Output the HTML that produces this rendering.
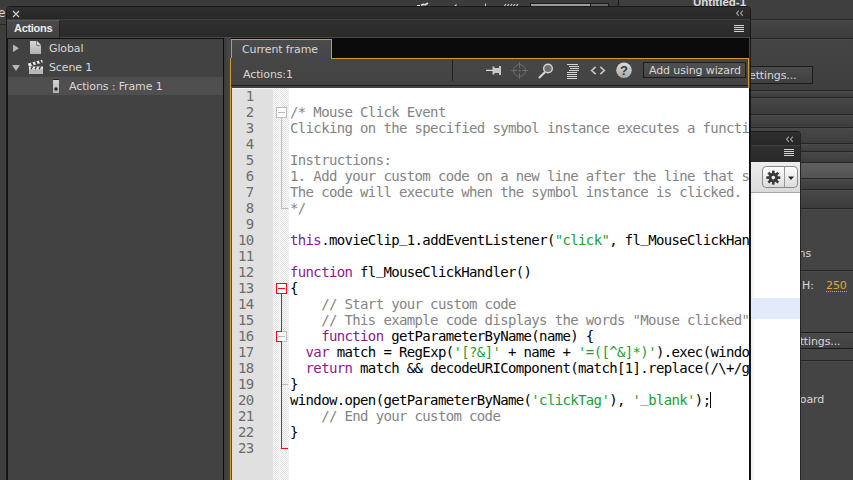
<!DOCTYPE html>
<html>
<head>
<meta charset="utf-8">
<title>Actions</title>
<style>
html,body{margin:0;padding:0;width:853px;height:480px;overflow:hidden;}
#root{position:absolute;left:0;top:0;width:853px;height:480px;overflow:hidden;background:#3d3d3d;}
body{width:853px;height:480px;overflow:hidden;background:#3d3d3d;position:relative;font-family:"DejaVu Sans","Liberation Sans",sans-serif;font-size:11px;color:#d8d8d8;letter-spacing:-0.12px;}
div,span,svg{box-sizing:border-box;}
.a{position:absolute;}
svg{position:absolute;overflow:visible;}
.t{position:absolute;white-space:pre;line-height:14px;height:14px;}
.hl{position:absolute;left:751px;width:102px;height:2px;background:linear-gradient(#252525 50%,#4a4a4a 50%);}
.bd{position:absolute;left:751px;width:102px;background:linear-gradient(#474747,#3c3c3c);}
/* ---------- main panel ---------- */
#panel{left:6px;top:6px;width:745px;height:480px;background:#424242;border:1px solid #1a1a1a;border-radius:4px 4px 0 0;overflow:hidden;}
#in{left:-7px;top:-7px;width:853px;height:480px;}
#titlebar{left:7px;top:7px;width:743px;height:12px;background:linear-gradient(#2f2f2f,#272727);}
#tabbar{left:7px;top:19px;width:743px;height:19px;background:linear-gradient(#303030,#2a2a2a);border-top:1px solid #3f3f3f;border-bottom:1px solid #484848;}
#tab{left:7px;top:20px;width:53px;height:18px;background:linear-gradient(#4a4a4a,#424242);border-top:1px solid #585858;border-right:1px solid #222;}
#tree{left:7px;top:38px;width:217px;height:450px;background:#424242;border:1px solid #0e0e0e;}
#sel{left:8px;top:77px;width:215px;height:18px;background:#4f4f4f;}
#gap{left:224px;top:38px;width:6px;height:450px;background:linear-gradient(90deg,#3b3b3b,#474747);}
/* ---------- editor ---------- */
#black{left:231px;top:38px;width:518px;height:21px;background:#0b0b0b;}
#ctab{left:231px;top:39px;width:101px;height:20px;background:linear-gradient(#4b4b4b,#464646);border:1px solid #d19b2c;border-bottom:none;}
#tool{left:230px;top:58px;width:519px;height:28px;background:linear-gradient(#464646,#434343);border:1px solid #d19b2c;border-bottom:none;border-top:none;}
#toolt{left:331px;top:58px;width:418px;height:1px;background:#d19b2c;}
#toolb{left:231px;top:85px;width:518px;height:3px;background:linear-gradient(#1e1e1e 1px,#444 1px);}
#edl{left:230px;top:86px;width:2px;height:420px;background:linear-gradient(90deg,#d69f2a 50%,#4e5258 50%);}
#gut{left:232px;top:88px;width:41px;height:420px;background:#e0e0e0;border-top:1px solid #f4f4f4;}
#fold{left:273px;top:88px;width:16px;height:420px;background:conic-gradient(#e2e2e2 25%,#fff 0 50%,#e2e2e2 0 75%,#fff 0) 0 0/2px 2px;}
#code{left:289px;top:88px;width:460px;height:420px;background:#fff;}
#clip{left:231px;top:0;width:518px;height:480px;overflow:hidden;}
#edr{left:749px;top:88px;width:2px;height:420px;background:#0c0c0c;}
.ln,.cl{position:absolute;font-family:"DejaVu Sans Mono","Liberation Mono",monospace;font-size:14px;line-height:16px;height:16px;white-space:pre;letter-spacing:-0.644px;}
.ln{left:222.5px;width:31px;text-align:right;color:#6c6c6c;}
.cl{left:290px;color:#000;}
.c{color:#848484;}
.k{color:#8b1a89;}
.s{color:#22a033;}
.u{position:relative;top:-3px;}
.fg{position:absolute;background:#bdbdbd;}
.fr{position:absolute;background:#ff0022;}
.fb{position:absolute;width:11px;height:11px;left:276px;background:#fff;border:1px solid #bdbdbd;}
/* ---------- second panel ---------- */
#p2{left:751px;top:131px;width:50px;height:360px;background:#2b2b2b;border-right:1px solid #242424;border-top:1px solid #1c1c1c;border-radius:0 4px 0 0;overflow:hidden;}
#p2in{left:-751px;top:-132px;width:853px;height:480px;}
</style>
</head>
<body>
<div id="root">
<!-- background application -->
<div class="a" style="left:0;top:0;width:853px;height:480px;">
  <div class="a" style="left:0;top:0;width:853px;height:24px;background:#3f3f3f;"></div>
  <div class="a" style="left:0;top:0;width:618px;height:7px;background:#3b3b3b;"></div>
  <div class="a" style="left:618px;top:0;width:1px;height:7px;background:#1a1a1a;"></div>
  <div class="a" style="left:0;top:24px;width:8px;height:1px;background:#262626;"></div>
  <div class="t" style="left:-2px;top:6px;font-size:12px;">e</div>
  <div class="a" style="left:530px;top:3px;width:79px;height:6px;border:1px solid #1c1c1c;background:linear-gradient(90deg,#9c9c9c 59px,#1c1c1c 59px,#1c1c1c 60px,#666 60px);"></div>
  <svg style="left:400px;top:0" width="130" height="7" viewBox="0 0 130 7"><path d="M17 5.800h3M21 5.400l3.500-1.400M24.500 5.200l3.500-2.200" stroke="#dcdcdc" stroke-width="1.700" fill="none"/><path d="M54 6.200l2.500-2.500v2.500z" fill="#d0d0d0"/><path d="M85.500 3.500v2.700M104.300 6l1.800-1.800M107.300 6l1.800-1.800M110.300 6l1.800-1.800M113.300 6l1.800-1.800M116.300 6l1.800-1.800" stroke="#c8c8c8" stroke-width="1.100" fill="none"/></svg>
  <div class="t" style="left:693px;top:-5px;color:#dcdcdc;font-family:'Liberation Sans',sans-serif;font-weight:bold;font-size:11.5px;letter-spacing:0;">Untitled-1</div>
  <div class="a" style="left:751px;top:19px;width:102px;height:19px;background:linear-gradient(#454545,#3c3c3c);"></div>
  <div class="hl" style="top:19px"></div>
  <div class="hl" style="top:38px"></div>
  <div class="bd" style="top:40px;height:50px;background:linear-gradient(#444,#3e3e3e);"></div>
  <div class="a" style="left:740px;top:66px;width:73px;height:18px;border:1px solid #1c1c1c;background:linear-gradient(#4b4b4b,#404040);"></div>
  <div class="t" style="left:749px;top:69px;">ettings...</div>
  <div class="bd" style="top:92px;height:5px"></div><div class="bd" style="top:99px;height:15px"></div><div class="bd" style="top:116px;height:11px"></div><div class="bd" style="top:129px;height:14px"></div><div class="bd" style="top:145px;height:6px"></div><div class="bd" style="top:153px;height:9px"></div><div class="bd" style="top:180px;height:9px"></div><div class="bd" style="top:191px;height:17px"></div>
  <div class="hl" style="top:90px"></div>
  <div class="hl" style="top:97px"></div>
  <div class="hl" style="top:114px"></div>
  <div class="hl" style="top:127px"></div>
  <div class="hl" style="top:143px"></div>
  <div class="hl" style="top:151px"></div>
  <div class="hl" style="top:162px"></div>
  <div class="a" style="left:801px;top:163px;width:52px;height:16px;background:linear-gradient(#606060,#525252);"></div>
  <div class="hl" style="top:178px"></div>
  <div class="hl" style="top:189px"></div>
  <div class="hl" style="top:208px"></div>
  <div class="a" style="left:801px;top:210px;width:52px;height:270px;background:#444;"></div>
  <div class="hl" style="top:270px"></div>
  <div class="t" style="left:789px;top:247px;">ions</div>
  <div class="t" style="left:802px;top:279px;">H:</div>
  <div class="t" style="left:826px;top:279px;color:#e6a634;">250</div>
  <div class="a" style="left:826px;top:291px;width:22px;height:1px;background:repeating-linear-gradient(90deg,#e2a232 0 1px,transparent 1px 2px);"></div>
  <div class="a" style="left:740px;top:332px;width:120px;height:17px;border:1px solid #1c1c1c;background:linear-gradient(#4b4b4b,#404040);"></div>
  <div class="t" style="left:793px;top:335px;">ettings...</div>
  <div class="hl" style="top:360px"></div>
  <div class="t" style="left:793px;top:393px;">board</div>
</div>

<!-- Actions panel -->
<div id="panel" class="a"><div id="in" class="a">
  <div id="titlebar" class="a"></div>
  <svg style="left:11.500px;top:10px" width="8" height="8" viewBox="0 0 8 8"><path d="M1 1l6 6M7 1l-6 6" stroke="#cfcfcf" stroke-width="1.2" fill="none"/></svg>
  <svg style="left:735px;top:9px" width="10" height="8" viewBox="0 0 10 8"><path d="M3.800 1.600L1.600 4.200L3.800 6.800M7.800 1.600L5.600 4.200L7.800 6.800" stroke="#a4a4a4" stroke-width="1.100" fill="none"/></svg>
  <div id="tabbar" class="a"></div>
  <div id="tab" class="a"></div>
  <div class="t" style="left:14px;top:21px;font-family:'Liberation Sans',sans-serif;font-weight:bold;font-size:11px;letter-spacing:-0.3px;color:#ececec;">Actions</div>
  <div class="a" style="left:734px;top:25px;width:10px;height:7px;background:repeating-linear-gradient(#d4d4d4 0 1px,transparent 1px 2px);"></div>
  <div id="tree" class="a"></div>
  <div id="sel" class="a"></div>
  <svg style="left:8px;top:38px" width="60" height="60" viewBox="0 0 60 60">
    <defs><linearGradient id="g1" x1="0" y1="0" x2="0" y2="1"><stop offset="0" stop-color="#d8d8d8"/><stop offset="1" stop-color="#b0b0b0"/></linearGradient></defs>
    <path d="M5 6.5L11 10.2L5 14z" fill="#b6b6b6"/>
    <path d="M22 3h7l4 4v9h-11z" fill="url(#g1)"/>
    <path d="M28.600 3v4.400h4.400z" fill="#e6e6e6"/><path d="M28.600 3.200v4.200h4.200" fill="none" stroke="#555" stroke-width="0.800"/>
    <path d="M4 27h8l-4 6z" fill="#b6b6b6"/>
    <path d="M21 30h14v6h-14z" fill="#b8b8b8"/>
    <path d="M20 25.600l14 -3.800l0.800 2.800l-14 3.800z" fill="#ececec"/>
    <path d="M23.500 24.400l1.400 3M27.500 23.300l1.400 3M31.500 22.200l1.400 3" stroke="#383838" stroke-width="1.700"/>
    <path d="M21 28.6h14v2.6h-14z" fill="#e8e8e8"/>
    <path d="M24.5 28.6l-1.4 2.6M28.5 28.6l-1.4 2.6M32.500 28.6l-1.4 2.6" stroke="#3a3a3a" stroke-width="1.4"/>
    <rect x="45" y="41" width="6" height="14" fill="url(#g1)"/>
    <rect x="45" y="41" width="6" height="1" fill="#222"/>
    <circle cx="48" cy="51" r="1.7" fill="#222"/>
  </svg>
  <div class="t" style="left:49px;top:42px;">Global</div>
  <div class="t" style="left:49px;top:61px;">Scene 1</div>
  <div class="t" style="left:69px;top:80px;">Actions : Frame 1</div>
  <div id="gap" class="a"></div>

  <div id="black" class="a"></div>
  <div id="ctab" class="a"></div>
  <div class="t" style="left:242px;top:43px;">Current frame</div>
  <div id="tool" class="a"></div><div id="toolt" class="a"></div>
  <div class="t" style="left:243px;top:68px;">Actions:1</div>
  <div class="a" style="left:452px;top:60px;width:1px;height:21px;background:#222;"></div>
  <svg style="left:480px;top:58px" width="160" height="30" viewBox="0 0 160 30">
    <defs><linearGradient id="g2" x1="0" y1="0" x2="0" y2="1"><stop offset="0" stop-color="#dcdcdc"/><stop offset="1" stop-color="#a8a8a8"/></linearGradient></defs>
    <!-- pin -->
    <path d="M6 12.4h7" stroke="#d8d8d8" stroke-width="1.2"/>
    <path d="M12.500 8.500h2v1.500h4.500v-2h2v9h-2v-2h-4.500v1.500h-2z" fill="#c8c8c8"/>
    <!-- crosshair -->
    <circle cx="39.500" cy="12.500" r="6" fill="none" stroke="#6c6c6c" stroke-width="1"/>
    <path d="M39.500 4v6M39.500 15v6M31 12.500h6M42 12.500h6M39.500 11.500v2M38.500 12.500h2" stroke="#6c6c6c" stroke-width="1" fill="none"/>
    <!-- magnifier -->
    <circle cx="68" cy="10.500" r="4.300" fill="#707070" stroke="#d6d6d6" stroke-width="1.400"/>
    <path d="M64.500 14.500L59.500 19.500" stroke="#d6d6d6" stroke-width="2" stroke-linecap="round"/>
    <!-- lines -->
    <path d="M87 6.500h11M89 8.500h10M90 10.500h9M89 12.500h10M87 14.500h10M87 16.500h10M87 18.500h10M87 20.500h10" stroke="#d4d4d4" stroke-width="1"/>
    <!-- code -->
    <path d="M115.700 8.800L111.700 12.500L115.700 16.200M120.300 8.800L124.300 12.500L120.300 16.200" stroke="#c4c4c4" stroke-width="1.700" fill="none"/>
    <!-- help -->
    <circle cx="144" cy="12.200" r="7.800" fill="url(#g2)"/>
    <text x="144" y="17" text-anchor="middle" font-family="Liberation Sans, sans-serif" font-weight="bold" font-size="13" fill="#3a3a3a">?</text>
  </svg>
  <div class="a" style="left:643px;top:62px;width:103px;height:16px;border:1px solid #1c1c1c;background:linear-gradient(#4f4f4f,#474747);"></div>
  <div class="t" style="left:649px;top:64px;">Add using wizard</div>
  <div id="toolb" class="a"></div><div class="a" style="left:748px;top:85px;width:1px;height:3px;background:#d19b2c;"></div>
  <div id="edl" class="a"></div>
  <div id="gut" class="a"></div>
  <div id="fold" class="a"></div>
  <div id="code" class="a"></div>
  <div id="clip" class="a"><div class="a" style="left:-231px;top:0;width:853px;height:480px;">
<div class="ln" style="top:88px">1</div>
<div class="ln" style="top:104px">2</div>
<div class="ln" style="top:120px">3</div>
<div class="ln" style="top:136px">4</div>
<div class="ln" style="top:152px">5</div>
<div class="ln" style="top:168px">6</div>
<div class="ln" style="top:184px">7</div>
<div class="ln" style="top:200px">8</div>
<div class="ln" style="top:216px">9</div>
<div class="ln" style="top:232px">10</div>
<div class="ln" style="top:248px">11</div>
<div class="ln" style="top:264px">12</div>
<div class="ln" style="top:280px">13</div>
<div class="ln" style="top:296px">14</div>
<div class="ln" style="top:312px">15</div>
<div class="ln" style="top:328px">16</div>
<div class="ln" style="top:344px">17</div>
<div class="ln" style="top:360px">18</div>
<div class="ln" style="top:376px">19</div>
<div class="ln" style="top:392px">20</div>
<div class="ln" style="top:408px">21</div>
<div class="ln" style="top:424px">22</div>
<div class="ln" style="top:440px">23</div>

<div class="cl" style="top:104px"><span class="c">/* Mouse Click Event</span></div>
<div class="cl" style="top:120px"><span class="c">Clicking on the specified symbol instance executes a function in which you can add your own custom code.</span></div>
<div class="cl" style="top:152px"><span class="c">Instructions:</span></div>
<div class="cl" style="top:168px"><span class="c">1. Add your custom code on a new line after the line that says "// Start your custom code" below.</span></div>
<div class="cl" style="top:184px"><span class="c">The code will execute when the symbol instance is clicked.</span></div>
<div class="cl" style="top:200px"><span class="c">*/</span></div>
<div class="cl" style="top:232px"><span class="k">this</span>.movieClip<span class=u>_</span>1.addEventListener(<span class="s">"click"</span>, fl<span class=u>_</span>MouseClickHandler.bind(<span class="k">this</span>));</div>
<div class="cl" style="top:264px"><span class="k">function</span> fl<span class=u>_</span>MouseClickHandler()</div>
<div class="cl" style="top:280px">{</div>
<div class="cl" style="top:296px"><span class="c">    // Start your custom code</span></div>
<div class="cl" style="top:312px"><span class="c">    // This example code displays the words "Mouse clicked" in the Output panel.</span></div>
<div class="cl" style="top:328px">    <span class="k">function</span> getParameterByName(name) {</div>
<div class="cl" style="top:344px">  <span class="k">var</span> match = RegExp(<span class="s">'[?&amp;]'</span> + name + <span class="s">'=([^&amp;]*)'</span>).exec(window.location.search);</div>
<div class="cl" style="top:360px">  <span class="k">return</span> match &amp;&amp; decodeURIComponent(match[1].replace(/\+/g, <span class="s">' '</span>));</div>
<div class="cl" style="top:376px">}</div>
<div class="cl" style="top:392px">window.open(getParameterByName(<span class="s">'clickTag'</span>), <span class="s">'<span class=u>_</span>blank'</span>);</div>
<div class="cl" style="top:408px"><span class="c">    // End your custom code</span></div>
<div class="cl" style="top:424px">}</div>

    <div class="a" style="left:710px;top:392px;width:1px;height:16px;background:#000;"></div>
    <!-- fold markers -->
    <div class="fg" style="left:281px;top:118px;width:1px;height:91px;"></div>
    <div class="fg" style="left:281px;top:208px;width:7px;height:1px;"></div>
    <div class="fb" style="top:107px;"><div class="fg" style="left:1px;top:4px;width:7px;height:1px;"></div></div>
    <div class="fr" style="left:281px;top:294px;width:1px;height:155px;"></div>
    <div class="fr" style="left:281px;top:448px;width:7px;height:1px;"></div>
    <div class="fg" style="left:282px;top:384px;width:6px;height:1px;"></div>
    <div class="fb" style="top:283px;border-color:#ff0022;"><div class="fr" style="left:1px;top:4px;width:7px;height:1px;"></div></div>
    <div class="fb" style="top:331px;border-left-color:#ff0022;"><div class="fg" style="left:1px;top:4px;width:7px;height:1px;"></div><div class="fr" style="left:-1px;top:-1px;width:6px;height:1px;"></div><div class="fr" style="left:-1px;top:9px;width:6px;height:1px;"></div></div>
  </div></div>
  <div id="edr" class="a"></div>
</div></div>

<!-- second floating panel -->
<div id="p2" class="a"><div id="p2in" class="a">
  <div class="a" style="left:751px;top:132px;width:50px;height:13px;background:linear-gradient(#2f2f2f,#272727);"></div>
  <svg style="left:785px;top:135px" width="10" height="8" viewBox="0 0 10 8"><path d="M3.800 1.600L1.600 4.200L3.800 6.800M7.800 1.600L5.600 4.200L7.800 6.800" stroke="#a4a4a4" stroke-width="1.100" fill="none"/></svg>
  <div class="a" style="left:751px;top:145px;width:50px;height:17px;background:linear-gradient(#303030,#2a2a2a);border-top:1px solid #3f3f3f;"></div>
  <div class="a" style="left:784px;top:149px;width:10px;height:7px;background:repeating-linear-gradient(#d4d4d4 0 1px,transparent 1px 2px);"></div>
  <div class="a" style="left:751px;top:162px;width:50px;height:31px;background:linear-gradient(#eeeeee,#dadada);border-bottom:1px solid #a8a8a8;"></div>
  <div class="a" style="left:762px;top:166px;width:36px;height:22px;border:1px solid #8a8a8a;border-radius:4px;background:linear-gradient(#fdfdfd,#dcdcdc);"></div>
  <div class="a" style="left:784px;top:167px;width:1px;height:20px;background:#9a9a9a;"></div>
  <svg style="left:765px;top:169px" width="32" height="17" viewBox="0 0 32 17">
    <g transform="translate(8.300 8.600)">
      <g fill="#3a3a3a">
        <rect x="-1.300" y="-7" width="2.600" height="14"/>
        <rect x="-1.300" y="-7" width="2.600" height="14" transform="rotate(45)"/>
        <rect x="-1.300" y="-7" width="2.600" height="14" transform="rotate(90)"/>
        <rect x="-1.300" y="-7" width="2.600" height="14" transform="rotate(135)"/>
        <circle r="4.800"/>
      </g>
      <circle r="1.800" fill="#f0f0f0"/>
    </g>
    <path d="M23 7.500h6l-3 3.500z" fill="#2a2a2a"/>
  </svg>
  <div class="a" style="left:751px;top:193px;width:50px;height:300px;background:linear-gradient(90deg,#ececec,#fff 4px);"></div>
  <div class="a" style="left:751px;top:298px;width:50px;height:21px;background:#e3ebfb;"></div>
</div></div>
</div>
</body>
</html>
